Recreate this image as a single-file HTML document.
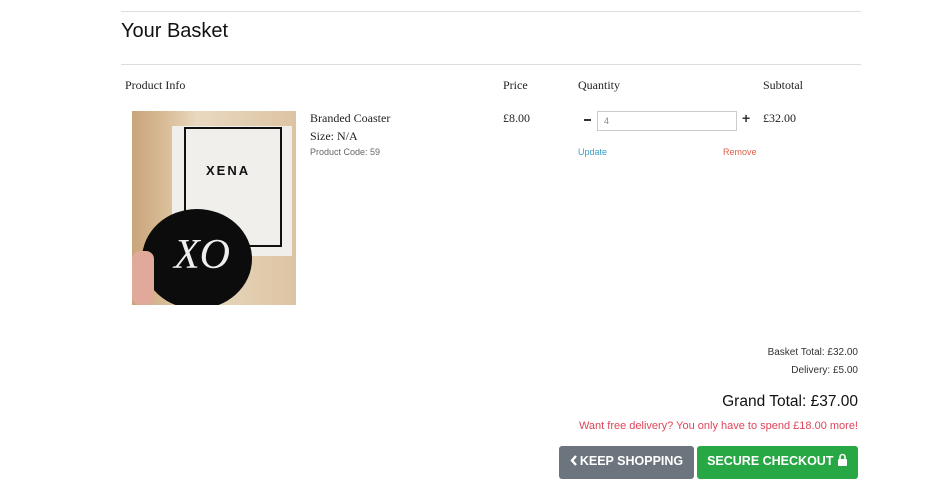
<!DOCTYPE html>
<html><head><meta charset="utf-8"><style>
body{margin:0;width:942px;height:484px;background:#fff;font-family:"Liberation Sans",sans-serif;color:#222;position:relative;overflow:hidden}
.a{position:absolute;white-space:nowrap}
.serif{font-family:"Liberation Serif",serif}
hr{position:absolute;left:121px;width:740px;border:0;border-top:1px solid #ddd;margin:0}
.btn{position:absolute;top:446px;height:33px;border-radius:3px;color:#fff;font-size:12.5px;font-weight:bold;line-height:31px;text-align:center}
</style></head><body>
<hr style="top:11px">
<div class="a" style="left:121px;top:20px;font-size:20px;color:#111">Your Basket</div>
<hr style="top:64px">
<div class="a serif" style="left:125px;top:78px;font-size:12px;color:#222">Product Info</div>
<div class="a serif" style="left:503px;top:78px;font-size:12px">Price</div>
<div class="a serif" style="left:578px;top:78px;font-size:12px">Quantity</div>
<div class="a serif" style="left:763px;top:78px;font-size:12px">Subtotal</div>

<div class="a" style="left:132px;top:111px;width:164px;height:194px;background:linear-gradient(90deg,#c9a57a 0,#d8bc96 20%,#e9d8c0 40%,#dcc4a2 100%);overflow:hidden">
  <div class="a" style="left:40px;top:15px;width:120px;height:130px;background:#f1efec"></div>
  <div class="a" style="left:52px;top:16px;width:94px;height:116px;border:2px solid #111"></div>
  <div class="a" style="left:74px;top:52px;font-size:13px;font-weight:bold;letter-spacing:2px;color:#111">XENA</div>
  <div class="a" style="left:10px;top:98px;width:110px;height:100px;border-radius:50%;background:#0c0c0c"></div>
  <div class="a serif" style="left:42px;top:120px;font-size:42px;color:#eee;font-style:italic">XO</div>
  <div class="a" style="left:0;top:140px;width:22px;height:54px;background:#e0a99a;border-radius:8px"></div>
</div>

<div class="a serif" style="left:310px;top:111px;font-size:12px;color:#222">Branded Coaster</div>
<div class="a serif" style="left:310px;top:129px;font-size:12px">Size: N/A</div>
<div class="a" style="left:310px;top:147px;font-size:9px;color:#666">Product Code: 59</div>
<div class="a serif" style="left:503px;top:111px;font-size:12px">£8.00</div>
<div class="a" style="left:584px;top:119px;width:7px;height:2px;background:#333"></div>
<div class="a" style="left:597px;top:111px;height:18px;border:1px solid #ccc;font-size:9px;color:#888;line-height:18px;padding-left:6px;width:132px">4</div>
<div class="a" style="left:742px;top:110px;font-size:14px;font-weight:bold;color:#333">+</div>
<div class="a serif" style="left:763px;top:111px;font-size:12px">£32.00</div>
<div class="a" style="left:578px;top:147px;font-size:9px;color:#3aa0c8">Update</div>
<div class="a" style="left:723px;top:147px;font-size:9px;color:#e0604a">Remove</div>

<div class="a" style="right:84px;top:347px;font-size:10px;color:#333">Basket Total: £32.00</div>
<div class="a" style="right:84px;top:365px;font-size:10px;color:#333">Delivery: £5.00</div>
<div class="a" style="right:84px;top:393px;font-size:15.5px;color:#111">Grand Total: £37.00</div>
<div class="a" style="right:84px;top:420px;font-size:11px;color:#e0455a">Want free delivery? You only have to spend £18.00 more!</div>

<div class="btn" style="left:559px;width:135px;background:#6c757d"><svg width="8" height="11" viewBox="0 0 8 11" style="vertical-align:-1px;margin-right:2px"><path d="M6 1L2 5.5 6 10" stroke="#fff" stroke-width="2.4" fill="none"/></svg>KEEP SHOPPING</div>
<div class="btn" style="left:697px;width:161px;background:#28a745">SECURE CHECKOUT <svg width="11" height="13" viewBox="0 0 11 13" style="vertical-align:-1px"><path d="M3 6V4a2.5 2.5 0 0 1 5 0v2" stroke="#fff" stroke-width="1.6" fill="none"/><rect x="1" y="6" width="9" height="7" rx="1" fill="#fff"/></svg></div>
</body></html>
